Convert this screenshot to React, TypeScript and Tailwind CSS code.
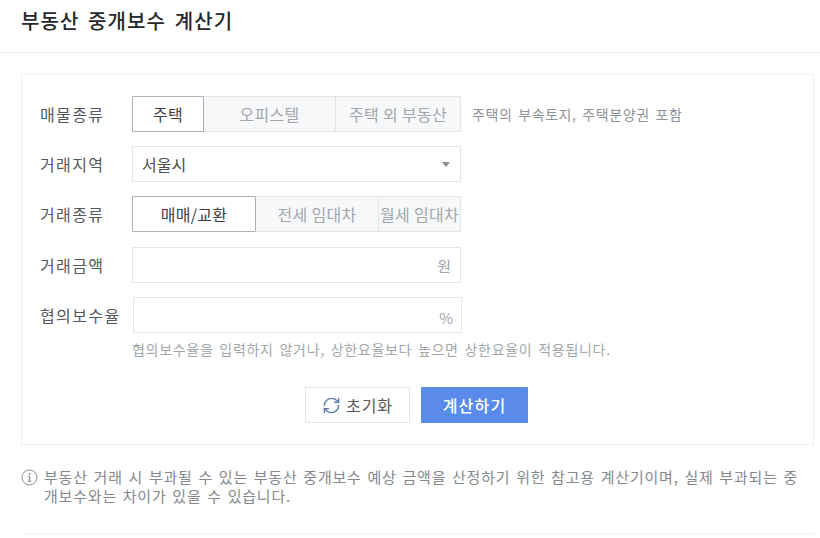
import { RefreshCw } from "lucide-react";

const font = { fontFamily: '"Noto Sans CJK KR", "Noto Sans", sans-serif' };

type Tab = { label: string; width: string };

function Tabs({ tabs }: { tabs: Tab[] }) {
  return (
    <div className="flex h-9 w-[329px]">
      {tabs.map((tab, i) => (
        <div
          key={tab.label}
          className={
            i === 0
              ? `${tab.width} flex items-center justify-center whitespace-nowrap rounded-[1px] border border-[#a9b0b8] bg-white text-[16px] tracking-[0.3px] text-[#3c3f44]`
              : `${tab.width} flex items-center justify-center whitespace-nowrap border border-l-0 border-[#e3e6e9] bg-[#f6f8fa] text-[16px] tracking-[0.3px] text-[#a2a6ab]`
          }
        >
          {tab.label}
        </div>
      ))}
    </div>
  );
}

function Row({ label, mt, children }: { label: string; mt: string; children: React.ReactNode }) {
  return (
    <div className={`flex items-center ${mt}`}>
      <div className="w-[92px] text-[16px] tracking-[1.4px] whitespace-nowrap text-[#55585d]">{label}</div>
      {children}
    </div>
  );
}

export default function App() {
  return (
    <div className="h-[538px] w-[820px] overflow-hidden bg-white" style={font}>
      <header className="flex h-[53px] items-start border-b border-[#f1f1f1] pl-[21px] pt-[7px]">
        <h1 className="text-[20px] leading-[28px] font-medium tracking-[1.1px] [word-spacing:3px] text-[#24272b]">부동산 중개보수 계산기</h1>
      </header>

      <section className="ml-[21px] mt-[21px] h-[371px] w-[793px] border border-[#f0f0f0] pl-[18px] pt-[21px]">
        <Row label="매물종류" mt="">
          <Tabs
            tabs={[
              { label: "주택", width: "w-[72px]" },
              { label: "오피스텔", width: "w-[132px]" },
              { label: "주택 외 부동산", width: "w-[125px]" },
            ]}
          />
          <span className="ml-[11px] text-[14px] tracking-[0.6px] [word-spacing:2px] text-[#8f9297]">주택의 부속토지, 주택분양권 포함</span>
        </Row>

        <Row label="거래지역" mt="mt-[14px]">
          <div className="flex h-9 w-[329px] items-center justify-between border border-[#e3e6e9] pl-[9px] pr-[10px] text-[16px] text-[#4a4d52]">
            <span>서울시</span>
            <span className="h-0 w-0 border-x-[4px] border-t-[5px] border-x-transparent border-t-[#8a8d91]" />
          </div>
        </Row>

        <Row label="거래종류" mt="mt-[14px]">
          <Tabs
            tabs={[
              { label: "매매/교환", width: "w-[124px]" },
              { label: "전세 임대차", width: "w-[123px]" },
              { label: "월세 임대차", width: "w-[82px]" },
            ]}
          />
        </Row>

        <Row label="거래금액" mt="mt-[15px]">
          <div className="flex h-9 w-[329px] items-center justify-end border border-[#e3e6e9] pr-[9px] pt-[3px] text-[15px] text-[#a2a6ab]">원</div>
        </Row>

        <Row label="협의보수율" mt="mt-[14px]">
          <div className="ml-[1px] flex h-9 w-[329px] items-center justify-end border border-[#e3e6e9] pr-[8px] pt-[7px] text-[15px] text-[#a2a6ab]">%</div>
        </Row>

        <p className="ml-[92px] mt-[7px] whitespace-nowrap text-[14px] leading-[18px] tracking-[0.7px] [word-spacing:2px] text-[#a2a6ab]">
          협의보수율을 입력하지 않거나, 상한요율보다 높으면 상한요율이 적용됩니다.
        </p>

        <div className="ml-[265px] mt-[29px] flex gap-[11px]">
          <button className="flex h-9 w-[105px] items-center justify-center gap-[5px] border border-[#e3e6e9] bg-white text-[16px] tracking-[1px] text-[#55585d]">
            <RefreshCw size={19} strokeWidth={1.8} className="text-[#5d7fa8]" />
            초기화
          </button>
          <button className="h-9 w-[107px] rounded-[1px] bg-[#5a8bea] text-[16px] font-medium tracking-[1.2px] text-white">계산하기</button>
        </div>
      </section>

      <div className="ml-[21px] mt-[22px] flex w-[793px] items-start">
        <svg width="17" height="17" viewBox="0 0 17 17" className="mt-[2px] shrink-0 text-[#8a8d91]">
          <circle cx="8.5" cy="8.5" r="7.5" fill="none" stroke="currentColor" strokeWidth="1" />
          <circle cx="8.5" cy="4.9" r="1" fill="currentColor" />
          <path d="M6.9 7.2h2.3v4.6h1.1v.9H6.8v-.9h1.1V8.1h-1z" fill="currentColor" />
        </svg>
        <p className="ml-[6px] w-[758px] text-[15px] leading-[19px] tracking-[0.8px] [word-spacing:1.6px] text-[#85888d]">
          부동산 거래 시 부과될 수 있는 부동산 중개보수 예상 금액을 산정하기 위한 참고용 계산기이며, 실제 부과되는 중개보수와는 차이가 있을 수 있습니다.
        </p>
      </div>

      <div className="ml-[21px] mt-[28px] w-[793px] border-t border-[#f1f1f1]" />
    </div>
  );
}
